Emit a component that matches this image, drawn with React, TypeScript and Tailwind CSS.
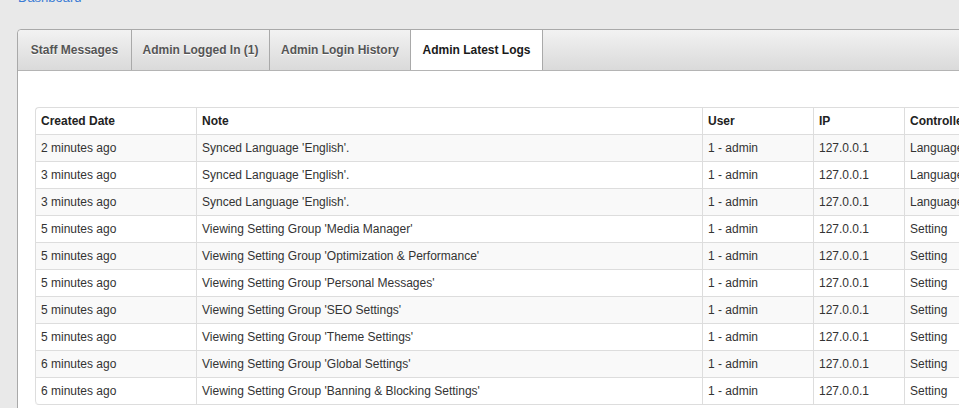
const rows = [
  ['2 minutes ago', "Synced Language 'English'.", 'Language'],
  ['3 minutes ago', "Synced Language 'English'.", 'Language'],
  ['3 minutes ago', "Synced Language 'English'.", 'Language'],
  ['5 minutes ago', "Viewing Setting Group 'Media Manager'", 'Setting'],
  ['5 minutes ago', "Viewing Setting Group 'Optimization & Performance'", 'Setting'],
  ['5 minutes ago', "Viewing Setting Group 'Personal Messages'", 'Setting'],
  ['5 minutes ago', "Viewing Setting Group 'SEO Settings'", 'Setting'],
  ['5 minutes ago', "Viewing Setting Group 'Theme Settings'", 'Setting'],
  ['6 minutes ago', "Viewing Setting Group 'Global Settings'", 'Setting'],
  ['6 minutes ago', "Viewing Setting Group 'Banning & Blocking Settings'", 'Setting'],
];

const tabs = [
  { label: 'Staff Messages', w: 'w-[114px]' },
  { label: 'Admin Logged In (1)', w: 'w-[138px]' },
  { label: 'Admin Login History', w: 'w-[141px]' },
  { label: 'Admin Latest Logs', w: 'w-[132px]' },
];

export default function App() {
  return (
    <div className="min-h-screen overflow-hidden bg-[#e9e9e9] font-['Liberation_Sans',Arial,sans-serif] text-[12px] text-[#333]">
      {/* breadcrumb, cut off by the top edge */}
      <div className="flow-root h-[29px]">
        <a href="#" className="-mt-[9px] ml-[18px] block text-[13px] leading-[14px] text-[#3a7bd5]">Dashboard</a>
      </div>

      <div className="ml-[17px] w-[1100px] rounded-tl-[4px] border border-[#a9a9a9] bg-white">
        <div className="flex h-[41px] rounded-tl-[4px] border-b border-[#b4b4b4] bg-gradient-to-b from-[#f2f2f2] to-[#dadada]">
          {tabs.map((t, i) => {
            const active = i === tabs.length - 1;
            return (
              <div
                key={t.label}
                className={
                  active
                    ? `flex ${t.w} items-center justify-center border-r border-[#a9a9a9] bg-white font-bold text-[#1a1a1a]`
                    : `flex ${t.w} items-center justify-center border-r border-[#a9a9a9] font-bold text-[#555] [text-shadow:0_1px_0_#fff]`
                }
              >
                {t.label}
              </div>
            );
          })}
        </div>

        <div className="pl-[17px] pt-[36px] pb-[20px]">
          <table className="w-[1000px] table-fixed border-separate border-spacing-0 rounded-[4px] border-r border-b border-[#ddd] text-left leading-[18px]">
            <colgroup>
              <col className="w-[161px]" />
              <col className="w-[506px]" />
              <col className="w-[111px]" />
              <col className="w-[91px]" />
              <col />
            </colgroup>
            <thead>
              <tr>
                {['Created Date', 'Note', 'User', 'IP', 'Controller'].map((h, i) => (
                  <th
                    key={h}
                    className={
                      'border-t border-l border-[#ddd] px-[5px] pt-[4px] pb-[4px] font-bold text-[#222] ' +
                      (i === 0 ? 'rounded-tl-[4px]' : '')
                    }
                  >
                    {h}
                  </th>
                ))}
              </tr>
            </thead>
            <tbody>
              {rows.map((r, idx) => (
                <tr key={idx} className={idx % 2 === 0 ? 'bg-[#f9f9f9]' : 'bg-white'}>
                  {[r[0], r[1], '1 - admin', '127.0.0.1', r[2]].map((c, i) => (
                    <td
                      key={i}
                      className={
                        'whitespace-nowrap border-t border-l border-[#ddd] px-[5px] pt-[4px] pb-[4px] ' +
                        (i === 0 && idx === rows.length - 1 ? 'rounded-bl-[4px]' : '')
                      }
                    >
                      {c}
                    </td>
                  ))}
                </tr>
              ))}
            </tbody>
          </table>
        </div>
      </div>
    </div>
  );
}
